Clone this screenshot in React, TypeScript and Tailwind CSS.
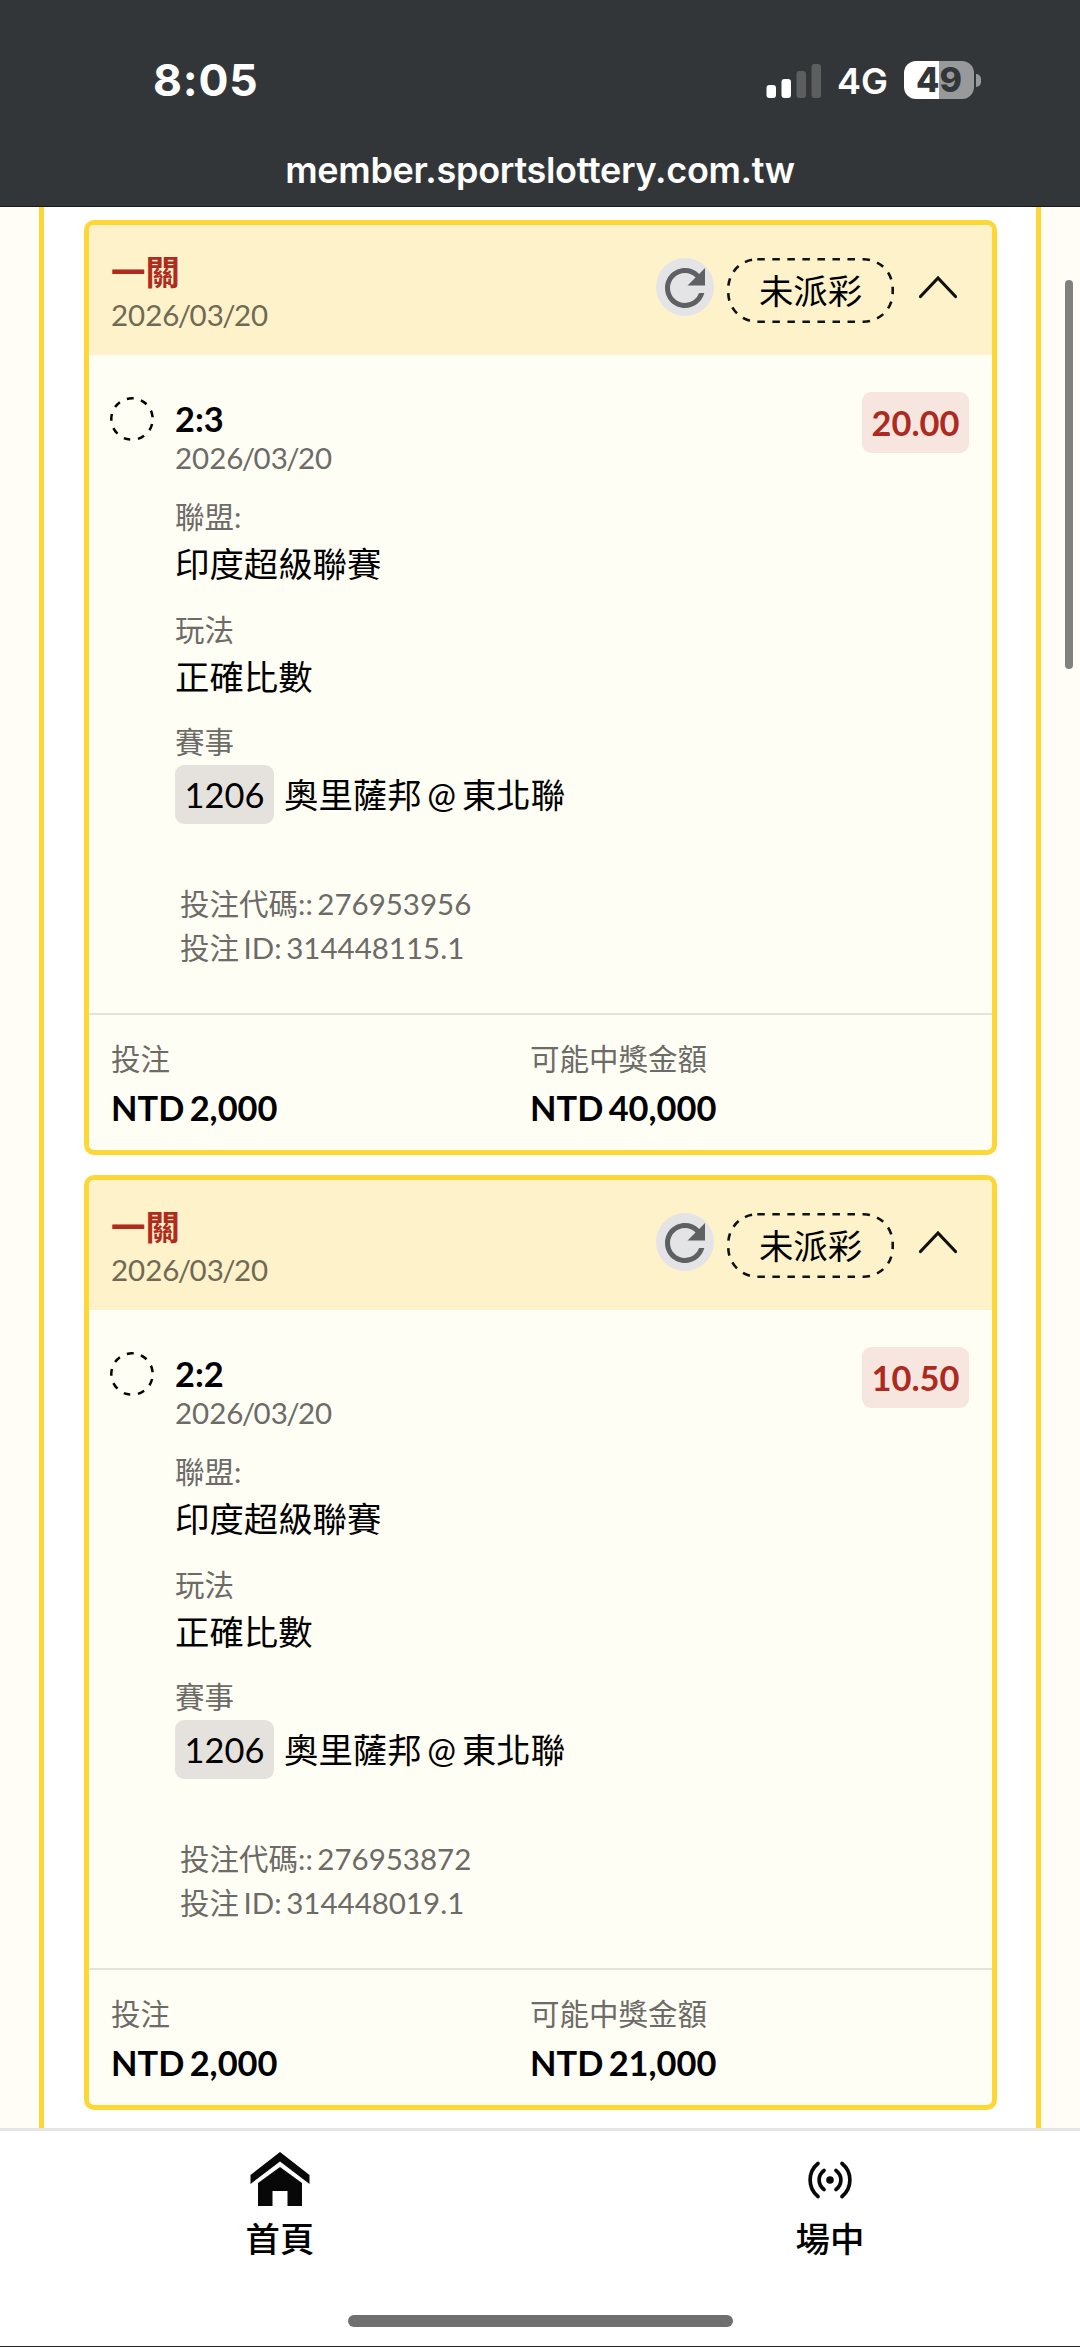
import React from 'react';

interface Bet {
  title: string;
  date: string;
  status: string;
  pick: string;
  odds: string;
  league: string;
  market: string;
  eventNo: string;
  match: string;
  betCode: string;
  betId: string;
  stake: string;
  payout: string;
}

const bets: Bet[] = [
  {
    title: '一關',
    date: '2026/03/20',
    status: '未派彩',
    pick: '2:3',
    odds: '20.00',
    league: '印度超級聯賽',
    market: '正確比數',
    eventNo: '1206',
    match: '奧里薩邦 @ 東北聯',
    betCode: '276953956',
    betId: '314448115.1',
    stake: 'NTD 2,000',
    payout: 'NTD 40,000',
  },
  {
    title: '一關',
    date: '2026/03/20',
    status: '未派彩',
    pick: '2:2',
    odds: '10.50',
    league: '印度超級聯賽',
    market: '正確比數',
    eventNo: '1206',
    match: '奧里薩邦 @ 東北聯',
    betCode: '276953872',
    betId: '314448019.1',
    stake: 'NTD 2,000',
    payout: 'NTD 21,000',
  },
];

function StatusBar() {
  return (
    <header className="h-[207px] shrink-0 border-b border-[#16181a] bg-[#333639] font-['Inter',sans-serif] text-white">
      <div className="flex h-[142px] items-start justify-between pt-[54px] pr-[99px] pl-[153px]">
        <span className="text-[44.5px] leading-[53px] font-bold tracking-[0.8px]">8:05</span>
        <div className="flex items-center pt-[6px]">
          <svg className="mt-px h-[36px] w-[56px]" viewBox="0 0 56 36" fill="#fff">
            <rect x="0.5" y="22" width="9.5" height="13" rx="3" />
            <rect x="15.5" y="16" width="9.5" height="19" rx="3" />
            <rect x="30.5" y="8" width="9.5" height="27" rx="3" fill="#5c5e60" />
            <rect x="45.5" y="1" width="9.5" height="34" rx="3" fill="#5c5e60" />
          </svg>
          <span className="mt-[2px] ml-[15px] w-[52px] text-[36px] leading-[38px] font-semibold">4G</span>
          <div className="ml-[15px] flex h-[38px] w-[70px] items-center justify-center rounded-[12px] bg-[linear-gradient(to_right,#fff_50%,#98999b_50%)]">
            <span className="text-[34px] leading-[38px] font-extrabold text-[#333639]">49</span>
          </div>
          <div className="ml-[2px] h-[13px] w-[5px] rounded-r-full bg-[#98999b]" />
        </div>
      </div>
      <div className="text-center text-[36px] leading-[56px] font-semibold tracking-[-0.3px]">
        member.sportslottery.com.tw
      </div>
    </header>
  );
}

function RefreshIcon() {
  return (
    <div className="flex h-[58px] w-[58px] items-center justify-center rounded-full bg-[#e4e4e6]">
      <svg className="mt-px h-[60px] w-[60px] shrink-0" viewBox="0 0 24 24" fill="#5e6063">
        <path d="M17.65 6.35A7.958 7.958 0 0 0 12 4c-4.42 0-7.99 3.58-7.99 8s3.57 8 7.99 8c3.73 0 6.84-2.55 7.73-6h-2.08A5.99 5.99 0 0 1 12 18c-3.31 0-6-2.69-6-6s2.69-6 6-6c1.66 0 3.14.69 4.22 1.78L13 11h7V4l-2.35 2.35z" />
      </svg>
    </div>
  );
}

// slashes sit tight against the digits
function DateText({ value }: { value: string }) {
  return (
    <>
      {value.split('/').map((part, i) => (
        <React.Fragment key={i}>
          {i > 0 && <span className="-mx-[1.6px]">/</span>}
          {part}
        </React.Fragment>
      ))}
    </>
  );
}

function Field({ label, value }: { label: string; value: string }) {
  return (
    <div>
      <div className="h-[40px] text-[29.5px] leading-[40px] text-[#6c6b67]">{label}</div>
      <div className="h-[54px] text-[34.4px] leading-[54px]">{value}</div>
    </div>
  );
}

function BetCard({ bet }: { bet: Bet }) {
  return (
    <article className="h-[935px] overflow-hidden rounded-[10px] border-[5px] border-[#fcd736] bg-[#fffef5]">
      <div className="flex h-[130px] bg-[#fef2cb] pr-[35px] pl-[22px]">
        <div className="flex-1 pt-[25px]">
          <div className="h-[44px] text-[34.4px] leading-[44px] font-bold text-[#b02a1e]">{bet.title}</div>
          <div className="h-[42px] text-[29.5px] leading-[42px] text-[#706953]">
            <DateText value={bet.date} />
          </div>
        </div>
        <div className="flex items-start pt-[33px]">
          <RefreshIcon />
          <div className="relative ml-[13px] flex h-[65px] w-[167px] items-center justify-center">
            <svg className="absolute inset-0" width="167" height="65" viewBox="0 0 167 65" fill="none">
              <rect
                x="1.3"
                y="1.3"
                width="164.4"
                height="62.4"
                rx="29"
                stroke="#111"
                strokeWidth="2.6"
                strokeDasharray="7.5 7.53"
              />
            </svg>
            <span className="text-[34.4px] leading-[40px]">{bet.status}</span>
          </div>
          <svg className="mt-[17px] ml-[25px] h-[24px] w-[38px]" viewBox="0 0 38 24" fill="none">
            <path d="M1.5 21.5 L19 3 L36.5 21.5" stroke="#111" strokeWidth="3.2" strokeLinecap="round" />
          </svg>
        </div>
      </div>

      <div className="flex h-[658px] pt-[42px] pr-[23px] pl-[21px]">
        <svg className="h-[44px] w-[44px]" viewBox="0 0 44 44" fill="none">
          <circle
            cx="22"
            cy="22"
            r="20.7"
            stroke="#000"
            strokeWidth="2.5"
            strokeDasharray="6.8 7.65"
            transform="rotate(14 22 22)"
          />
        </svg>
        <div className="ml-[21px] flex-1">
          <div className="h-[44px] text-[34.4px] leading-[44px] font-bold">{bet.pick}</div>
          <div className="h-[34px] text-[29.5px] leading-[34px] text-[#6c6b67]">
            <DateText value={bet.date} />
          </div>
          <div className="mt-[22px] flex flex-col gap-[19px]">
            <Field label="聯盟:" value={bet.league} />
            <Field label="玩法" value={bet.market} />
          </div>
          <div className="mt-[18px] h-[40px] text-[29.5px] leading-[40px] text-[#6c6b67]">賽事</div>
          <div className="mt-[3px] flex h-[59px] items-center text-[34.4px] leading-[59px]">
            <span className="w-[99px] rounded-[9px] bg-[#e5e2dd] text-center">{bet.eventNo}</span>
            <span className="ml-[10px]">{bet.match}</span>
          </div>
          <div className="mt-[58px] pl-[5px] text-[29.5px] leading-[44px] text-[#6c6b67]">
            <div className="h-[44px]">投注代碼:: {bet.betCode}</div>
            <div className="h-[44px]">投注 ID: {bet.betId}</div>
          </div>
        </div>
        <div className="mt-[-5px] h-[61px] w-[107px] rounded-[9px] bg-[#f6e6df] text-center text-[34.4px] leading-[61px] font-bold text-[#ac2a20]">
          {bet.odds}
        </div>
      </div>

      <div className="flex h-[137px] border-t-2 border-[#e5e2dd] pt-[24px] pl-[22px]">
        <div className="w-[419px]">
          <div className="h-[40px] text-[29.5px] leading-[40px] text-[#6c6b67]">投注</div>
          <div className="mt-[9px] h-[40px] text-[34.4px] leading-[40px] font-bold">{bet.stake}</div>
        </div>
        <div>
          <div className="h-[40px] text-[29.5px] leading-[40px] text-[#6c6b67]">可能中獎金額</div>
          <div className="mt-[9px] h-[40px] text-[34.4px] leading-[40px] font-bold">{bet.payout}</div>
        </div>
      </div>
    </article>
  );
}

function HomeIcon() {
  return (
    <svg className="h-[56px] w-[60px]" viewBox="0 0 60 56" fill="#080808">
      <path d="M30 1 L59.5 24 V33 L30 10.5 L0.5 33 V24 Z" />
      <path d="M30 16 L52 32 V55 H37.5 V40 H22.5 V55 H8 V32 Z" />
    </svg>
  );
}

function LiveIcon() {
  return (
    <svg className="h-[56px] w-[60px]" viewBox="0 0 60 56" fill="none" stroke="#080808" strokeWidth="3.7" strokeLinecap="round">
      <circle cx="30" cy="29" r="3.8" fill="#080808" stroke="none" />
      <path d="M18 12.5 C7.5 21 7.5 37 18 45.5" />
      <path d="M24 19.5 C17.5 24.5 17.5 33.5 24 38.5" />
      <path d="M36 19.5 C42.5 24.5 42.5 33.5 36 38.5" />
      <path d="M42 12.5 C52.5 21 52.5 37 42 45.5" />
    </svg>
  );
}

function BottomNav() {
  return (
    <nav className="flex h-[219px] shrink-0 flex-col items-center overflow-hidden border-t-[3px] border-b border-t-[#e5e5e5] border-b-[#222] bg-white">
      <div className="flex h-[184px] w-full pl-[5px] text-[34.4px] leading-[44px] font-medium">
        <a className="flex w-[550px] shrink-0 flex-col items-center pt-[20px]">
          <HomeIcon />
          <span className="mt-[10px] h-[44px]">首頁</span>
        </a>
        <a className="flex w-[550px] shrink-0 flex-col items-center pt-[20px]">
          <LiveIcon />
          <span className="mt-[10px] h-[44px]">場中</span>
        </a>
      </div>
      <div className="h-[12px] w-[385px] rounded-full bg-[#6f6f6f]" />
    </nav>
  );
}

export default function App() {
  return (
    <div className="flex h-[2347px] w-[1080px] flex-col overflow-hidden bg-[#fffdf5] font-['Lato','Noto_Sans_CJK_TC',sans-serif] text-black [word-spacing:-3px]">
      <StatusBar />
      <main className="relative h-[1921px] overflow-hidden px-[39px]">
        <div className="flex h-full flex-col gap-[20px] border-x-[5px] border-[#fcd736] bg-white pt-[13px] pr-[39px] pl-[40px]">
          {bets.map((bet) => (
            <BetCard key={bet.betId} bet={bet} />
          ))}
        </div>
        <div className="absolute top-[73px] right-[7px] h-[389px] w-[8px] rounded-full bg-[#80807c]" />
      </main>
      <BottomNav />
    </div>
  );
}
